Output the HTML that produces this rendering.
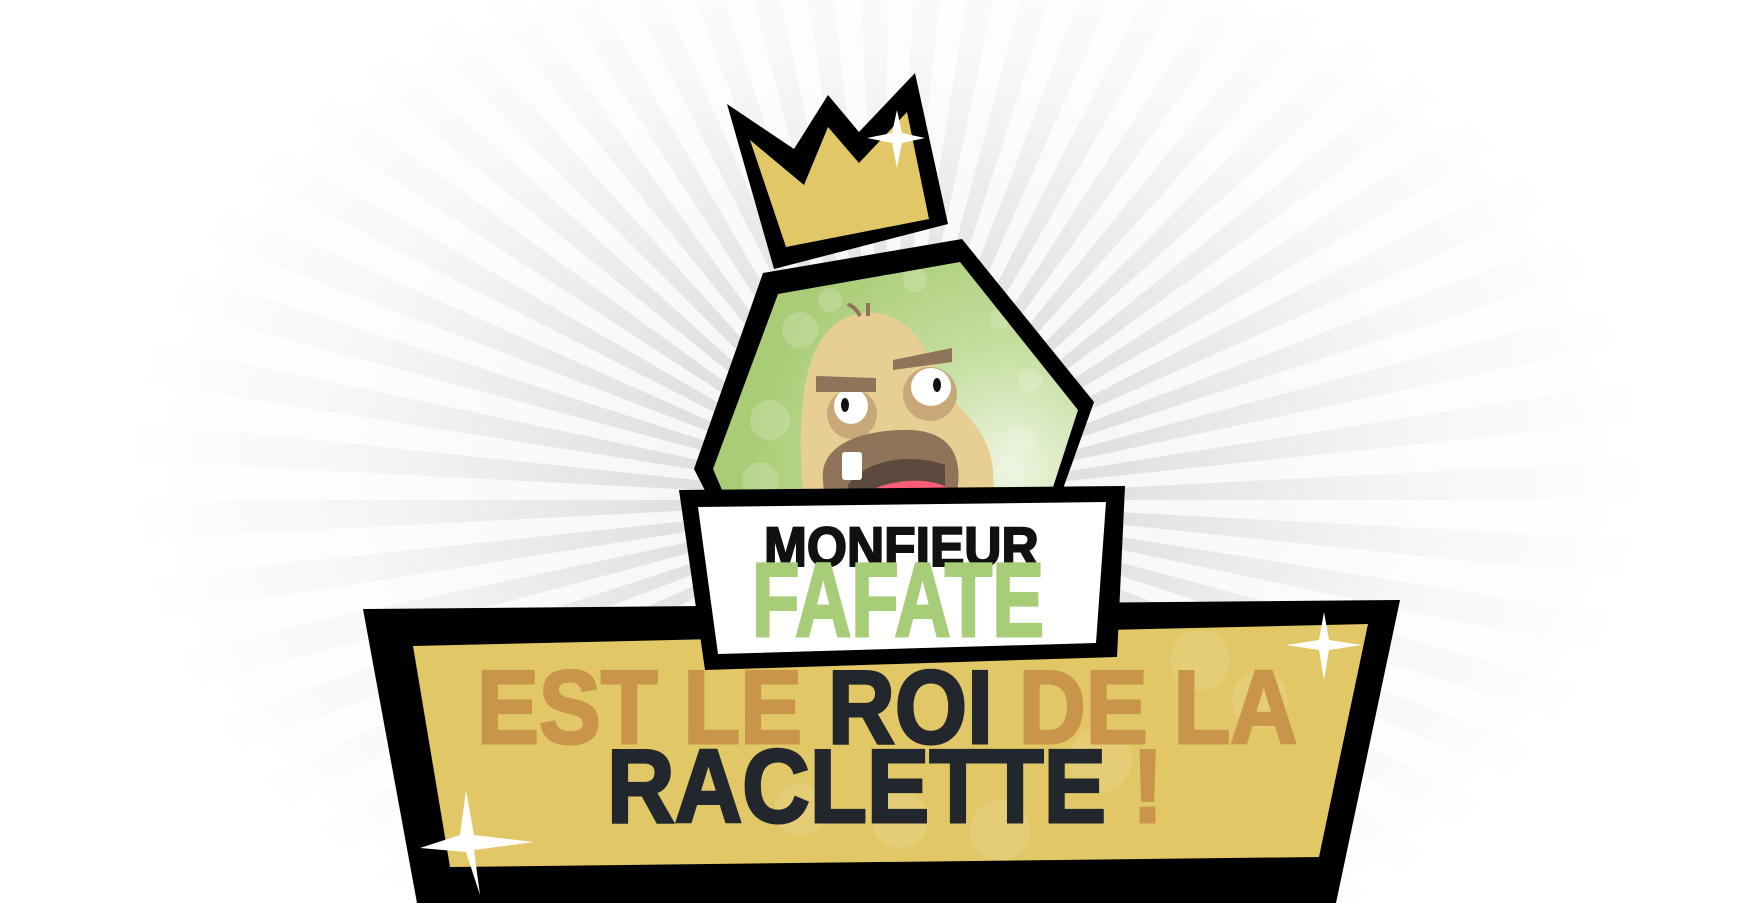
<!DOCTYPE html>
<html><head><meta charset="utf-8"><style>
html,body{margin:0;padding:0;width:1751px;height:903px;overflow:hidden;background:#fff}
#rays{position:absolute;left:0;top:0;width:1751px;height:903px;
background:repeating-conic-gradient(from 0deg at 887px 500px,#f6f6f6 0deg 3deg,#dcdcdc 3deg 6deg);}
#fade{position:absolute;left:0;top:0;width:1751px;height:903px;
background:radial-gradient(ellipse 760px 560px at 887px 470px,rgba(255,255,255,0) 0%,rgba(255,255,255,0.15) 30%,rgba(255,255,255,0.75) 70%,rgba(255,255,255,1) 100%);}
svg{position:absolute;left:0;top:0}
text{font-family:"Liberation Sans",sans-serif;font-weight:bold}
</style></head><body>
<div id="rays"></div><div id="fade"></div>
<svg width="1751" height="903" viewBox="0 0 1751 903">
<defs>
<radialGradient id="gg" cx="1010" cy="470" r="260" gradientUnits="userSpaceOnUse">
<stop offset="0" stop-color="#eef5e2"/><stop offset="0.5" stop-color="#c3dd9c"/><stop offset="1" stop-color="#a9cd76"/></radialGradient>
<clipPath id="hex"><polygon points="778,294 960,262 1078,410 1044,515 735,520 713,469"/></clipPath>
</defs>
<polygon points="727,104 794,149 828,95 859,132 915,73 948,224 774,269" fill="#000"/>
<polygon points="750,140 804,185 828,127 859,163 907,112 929,219 786,247" fill="#e2c766"/>
<polygon points="763,273 962,239 1094,402 1049,528 718,516 694,469" fill="#000"/>
<g clip-path="url(#hex)">
<rect x="700" y="250" width="400" height="280" fill="url(#gg)"/>
<g fill="#fff" opacity="0.18"><circle cx="800" cy="330" r="18"/><circle cx="830" cy="300" r="12"/><circle cx="915" cy="280" r="12"/><circle cx="1000" cy="320" r="10"/><circle cx="770" cy="420" r="20"/><circle cx="1030" cy="380" r="12"/><circle cx="1020" cy="440" r="14"/><circle cx="760" cy="480" r="18"/></g>
<path d="M805,515 C795,420 800,340 845,318 C890,300 925,330 935,380 C960,410 990,430 993,470 L995,520 Z" fill="#e7cf93"/>
<path d="M860,316 C855,306 850,306 848,304" stroke="#8f7459" stroke-width="4" fill="none"/>
<path d="M868,316 L868,303" stroke="#8f7459" stroke-width="4"/>
<circle cx="852" cy="414" r="25" fill="#c8a878"/><circle cx="930" cy="394" r="27" fill="#c8a878"/>
<ellipse cx="851" cy="406" rx="17" ry="18" fill="#fff"/><ellipse cx="931" cy="387" rx="20" ry="19" fill="#fff"/>
<ellipse cx="845" cy="405" rx="4" ry="7" fill="#111"/><ellipse cx="937" cy="385" rx="4" ry="7" fill="#111"/>
<polygon points="816,376 876,378 876,392 816,392" fill="#8f7459"/>
<polygon points="893,360 952,348 952,362 893,370" fill="#8f7459"/>
<path d="M823,480 C820,450 850,432 900,430 C945,428 962,450 958,485 L952,530 L840,530 C828,515 824,500 823,480Z" fill="#8f7459"/>
<path d="M848,485 C865,460 910,452 945,465 L945,530 L855,530Z" fill="#5c4a3e"/>
<rect x="842" y="452" width="20" height="28" rx="3" fill="#fff"/>
<path d="M860,500 C875,478 935,475 950,490 C955,505 945,520 935,525 L860,525Z" fill="#fd5d78"/>
</g>
<polygon points="363,609 1400,600 1336,903 417,903" fill="#000"/>
<polygon points="413,646 1368,624 1319,857 450,867" fill="#e2c766"/>
<g fill="#fff" opacity="0.1"><circle cx="1200" cy="660" r="30"/><circle cx="1260" cy="700" r="28"/><circle cx="1100" cy="760" r="32"/><circle cx="900" cy="820" r="28"/><circle cx="1000" cy="830" r="30"/><circle cx="800" cy="810" r="26"/></g>
<polygon points="679,490 1125,486 1117,657 705,670" fill="#000"/>
<polygon points="698,507 1106,502 1096,643 718,654" fill="#fff"/>
<text transform="translate(764,566) scale(0.92,1)" font-size="56" fill="#111" stroke="#111" stroke-width="2">MONFIEUR</text>
<text transform="translate(752,636) scale(0.74,1)" font-size="105" fill="#a8cd78" stroke="#a8cd78" stroke-width="3">FAFATE</text>
<text transform="translate(477,743) scale(0.893,1)" font-size="104" fill="#c8954a" stroke="#c8954a" stroke-width="3">EST LE <tspan fill="#22272e" stroke="#22272e">ROI</tspan> DE LA</text>
<text transform="translate(607,822) scale(0.90,1)" font-size="104" fill="#22272e" stroke="#22272e" stroke-width="3">RACLETTE <tspan fill="#c8954a" stroke="#c8954a">!</tspan></text>
<g fill="#fff">
<path d="M897,110 L902,133 L925,138 L902,143 L897,168 L892,143 L867,138 L892,133Z"/>
<path d="M1324,612 L1329,640 L1362,645 L1329,650 L1324,680 L1319,650 L1286,645 L1319,640Z"/>
<path d="M466,790 L474,835 L534,842 L474,850 L480,895 L466,852 L420,848 L460,835Z"/>
</g>
</svg>
</body></html>
